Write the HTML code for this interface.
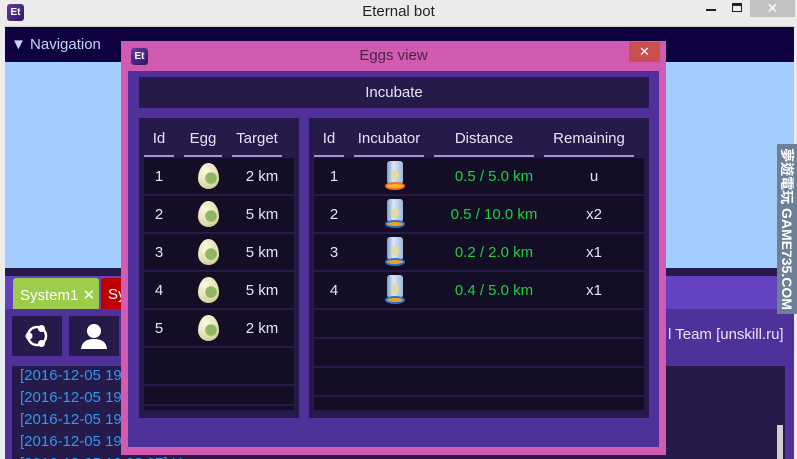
<!DOCTYPE html>
<html style="width:797px;height:459px;overflow:hidden"><head><meta charset="utf-8"><style>
*{margin:0;padding:0;box-sizing:border-box}
body{width:797px;height:459px;overflow:hidden;background:#ececec;font-family:"Liberation Sans","DejaVu Sans",sans-serif;position:relative;color:#e8e4f8}
.a{position:absolute}
.c{display:flex;align-items:center;justify-content:center}
.logo{width:17px;height:17px;background:linear-gradient(135deg,#6a3aa0,#2a1560);border-radius:3px;color:#fff;font-size:10px;font-weight:bold}
.egg{display:block;width:21px;height:26px;border-radius:50% 50% 50% 50%/60% 60% 40% 40%;background:radial-gradient(circle at 62% 58%,#8fb565 0 28%,transparent 30%),radial-gradient(circle at 35% 30%,#fbf8de,#ddd8a8 70%,#b5b07a);}
.inc{display:block;width:20px;height:30px;position:relative}
.inc .g{position:absolute;left:2px;top:0;width:16px;height:23px;border-radius:3px;background:linear-gradient(90deg,#7da0c8,#dbe8f6 40%,#9cb7d8);}
.inc .e{position:absolute;left:6px;top:9px;width:8px;height:10px;border-radius:50%;background:#e0dca0}
.inc .b{position:absolute;left:0;top:21px;width:20px;height:8px;border-radius:50%;background:#f0a020;border:2px solid #2a70d0}
.inc.o .b{background:#ffb030;border-color:#f07020}
.hd{position:absolute;top:130px;font-size:15px;text-align:center;border-bottom:2px solid #a58fe0;height:27px}
.row{position:absolute;height:38px;border-bottom:2px solid #261a4a;font-size:15px}
.row span{position:absolute;top:0;height:36px;display:flex;align-items:center;justify-content:center}
.log{position:absolute;left:20px;font-size:15px;color:#2b9af0;white-space:nowrap}
</style></head><body>
<div class="a logo c" style="left:7px;top:4px">Et</div>
<div class="a" style="left:0;width:797px;top:3px;text-align:center;font-size:15px;color:#222">Eternal bot</div>
<div class="a" style="left:706px;top:9px;width:10px;height:2px;background:#222"></div>
<div class="a" style="left:732px;top:3px;width:10px;height:9px;border:1.5px solid #222;border-top-width:3px"></div>
<div class="a c" style="left:750px;top:0;width:45px;height:17px;background:#c2c2c2;color:#fff;font-size:14px">✕</div>
<div class="a" style="left:4px;top:26px;width:791px;height:1px;background:#ccc"></div>
<div class="a" style="left:5px;top:27px;width:789px;height:35px;background:#0f0040"></div>
<div class="a" style="left:11px;top:36px;font-size:15px;color:#c7d4f8">▼ Navigation</div>
<div class="a" style="left:5px;top:62px;width:789px;height:206px;background:#a3cdfd"></div>
<div class="a" style="left:5px;top:268px;width:789px;height:8px;background:#261a4a"></div>
<div class="a" style="left:5px;top:276px;width:789px;height:33px;background:#6442c0"></div>
<div class="a" style="left:5px;top:309px;width:789px;height:150px;background:#4f3199"></div>
<div class="a" style="left:13px;top:278px;width:86px;height:31px;background:#9ccc4a;border-radius:3px 3px 0 0;font-size:15px;color:#fff;padding:8px 0 0 7px;white-space:nowrap">System1 ✕</div>
<div class="a" style="left:101px;top:278px;width:30px;height:31px;background:#c00000;border-radius:3px 3px 0 0;font-size:15px;color:#fff;padding:8px 0 0 7px;overflow:hidden">Sy</div>
<div class="a c" style="left:12px;top:316px;width:50px;height:40px;background:#261a4a">
<svg width="26" height="26" viewBox="0 0 26 26"><circle cx="13" cy="13" r="9" fill="none" stroke="#fff" stroke-width="2.5"/><circle cx="5" cy="13" r="3.5" fill="#fff"/><circle cx="17.5" cy="5.5" r="3.5" fill="#fff"/><circle cx="17.5" cy="20.5" r="3.5" fill="#fff"/></svg></div>
<div class="a c" style="left:69px;top:316px;width:50px;height:40px;background:#261a4a">
<svg width="28" height="28" viewBox="0 0 28 28"><circle cx="14" cy="9" r="7" fill="#fff"/><path d="M1 27 Q2 17 14 17 Q26 17 27 27Z" fill="#fff"/></svg></div>
<div class="a" style="left:12px;top:366px;width:773px;height:93px;background:#261a4a"></div>
<div class="log" style="top:367px">[2016-12-05 19</div>
<div class="log" style="top:389px">[2016-12-05 19</div>
<div class="log" style="top:411px">[2016-12-05 19</div>
<div class="log" style="top:433px">[2016-12-05 19</div>
<div class="log" style="top:455px">[2016-12-05 19:08:07] U</div>
<div class="a" style="left:668px;top:326px;font-size:15px;color:#e8e4f8">l Team [unskill.ru]</div>
<div class="a" style="left:777px;top:425px;width:6px;height:34px;background:#d0d0d0"></div>
<div class="a" style="left:777px;top:144px;width:20px;height:170px;background:#6e7f98"></div>
<div class="a" style="left:787px;top:229px;width:170px;transform:translate(-50%,-50%) rotate(90deg);text-align:center;font-size:14px;font-weight:bold;color:#fff;font-family:'Liberation Sans','Noto Sans CJK TC',sans-serif;white-space:nowrap">夢遊電玩 GAME735.COM</div>
<div class="a" style="left:121px;top:41px;width:545px;height:414px;background:#d05bb0"></div>
<div class="a logo c" style="left:131px;top:48px">Et</div>
<div class="a" style="left:121px;top:47px;width:545px;text-align:center;font-size:15px;color:#4a2448">Eggs view</div>
<div class="a c" style="left:629px;top:42px;width:31px;height:20px;background:#c9504f;color:#fff;font-size:13px">✕</div>
<div class="a" style="left:128px;top:71px;width:531px;height:376px;background:#4f3199"></div>
<div class="a c" style="left:139px;top:77px;width:510px;height:31px;background:#261a4a;font-size:15px">Incubate</div>
<div class="a" style="left:139px;top:118px;width:160px;height:300px;background:#261a4a"></div>
<div class="a" style="left:309px;top:118px;width:340px;height:300px;background:#261a4a"></div>
<div class="a" style="left:144px;top:158px;width:150px;height:252px;background:#130d26"></div>
<div class="a" style="left:314px;top:158px;width:330px;height:252px;background:#130d26"></div>
<div class="hd" style="left:144px;width:30px">Id</div>
<div class="hd" style="left:184px;width:38px">Egg</div>
<div class="hd" style="left:232px;width:50px">Target</div>
<div class="hd" style="left:314px;width:30px">Id</div>
<div class="hd" style="left:354px;width:70px">Incubator</div>
<div class="hd" style="left:434px;width:100px">Distance</div>
<div class="hd" style="left:544px;width:90px">Remaining</div>
<div class="row" style="left:144px;top:158px;width:150px"><span style="left:0;width:30px">1</span><span style="left:52px;width:24px"><i class="egg"></i></span><span style="left:90px;width:56px">2 km</span></div>
<div class="row" style="left:144px;top:196px;width:150px"><span style="left:0;width:30px">2</span><span style="left:52px;width:24px"><i class="egg"></i></span><span style="left:90px;width:56px">5 km</span></div>
<div class="row" style="left:144px;top:234px;width:150px"><span style="left:0;width:30px">3</span><span style="left:52px;width:24px"><i class="egg"></i></span><span style="left:90px;width:56px">5 km</span></div>
<div class="row" style="left:144px;top:272px;width:150px"><span style="left:0;width:30px">4</span><span style="left:52px;width:24px"><i class="egg"></i></span><span style="left:90px;width:56px">5 km</span></div>
<div class="row" style="left:144px;top:310px;width:150px"><span style="left:0;width:30px">5</span><span style="left:52px;width:24px"><i class="egg"></i></span><span style="left:90px;width:56px">2 km</span></div>
<div class="row" style="left:144px;top:348px;width:150px"></div>
<div class="row" style="left:144px;top:377px;width:150px;height:29px"></div>
<div class="row" style="left:314px;top:158px;width:330px"><span style="left:0;width:40px">1</span><span style="left:70px;width:22px"><i class="inc o"><i class="g"></i><i class="e"></i><i class="b"></i></i></span><span style="left:120px;width:120px;color:#1fd040">0.5 / 5.0 km</span><span style="left:240px;width:80px">u</span></div>
<div class="row" style="left:314px;top:196px;width:330px"><span style="left:0;width:40px">2</span><span style="left:70px;width:22px"><i class="inc"><i class="g"></i><i class="e"></i><i class="b"></i></i></span><span style="left:120px;width:120px;color:#1fd040">0.5 / 10.0 km</span><span style="left:240px;width:80px">x2</span></div>
<div class="row" style="left:314px;top:234px;width:330px"><span style="left:0;width:40px">3</span><span style="left:70px;width:22px"><i class="inc"><i class="g"></i><i class="e"></i><i class="b"></i></i></span><span style="left:120px;width:120px;color:#1fd040">0.2 / 2.0 km</span><span style="left:240px;width:80px">x1</span></div>
<div class="row" style="left:314px;top:272px;width:330px"><span style="left:0;width:40px">4</span><span style="left:70px;width:22px"><i class="inc"><i class="g"></i><i class="e"></i><i class="b"></i></i></span><span style="left:120px;width:120px;color:#1fd040">0.4 / 5.0 km</span><span style="left:240px;width:80px">x1</span></div>
<div class="row" style="left:314px;top:310px;width:330px;height:29px"></div>
<div class="row" style="left:314px;top:339px;width:330px;height:29px"></div>
<div class="row" style="left:314px;top:368px;width:330px;height:29px"></div>
</body></html>
